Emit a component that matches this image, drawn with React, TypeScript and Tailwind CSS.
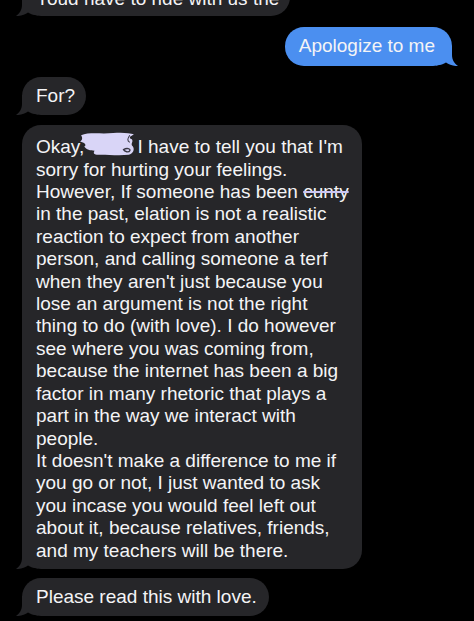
import React from "react";

const lines: React.ReactNode[] = [
  <>
    Okay,
    <span className="relative inline-block w-[48px] h-[1em] align-baseline">
      <svg className="absolute left-[-6px] top-[-3px]" width="58" height="27" viewBox="0 0 56 26">
        <path
          d="M3 4 C10 1 22 3 34 2 C42 1 50 2 54 3 C51 5 48 6 52 8 C54 11 50 12 53 15 C55 18 53 22 49 23 C40 24 30 23 22 23 C16 23 14 22 16 19 C12 19 8 18 6 15 C9 13 6 11 2 10 C5 8 4 6 3 4 Z"
          fill="#d9d5f7"
        />
        <path d="M44 18 C47 16 51 17 50 19 C49 21 45 20 44 18 Z" fill="none" stroke="#3a3845" strokeWidth="1.4" />
        <path d="M50 4 C48 7 47 9 50 11" fill="none" stroke="#3a3845" strokeWidth="1" />
      </svg>
    </span>{" "}
    I have to tell you that I'm
  </>,
  "sorry for hurting your feelings.",
  <>
    However, If someone has been{" "}
    <span className="line-through decoration-[#cbc6f2] decoration-2">cunty</span>
  </>,
  "in the past, elation is not a realistic",
  "reaction to expect from another",
  "person, and calling someone a terf",
  "when they aren't just because you",
  "lose an argument is not the right",
  "thing to do (with love). I do however",
  "see where you was coming from,",
  "because the internet has been a big",
  "factor in many rhetoric that plays a",
  "part in the way we interact with",
  "people.",
  "It doesn't make a difference to me if",
  "you go or not, I just wanted to ask",
  "you incase you would feel left out",
  "about it, because relatives, friends,",
  "and my teachers will be there.",
];

function Tail({ color, side }: { color: string; side: "left" | "right" }) {
  return (
    <svg
      className={
        side === "left"
          ? "absolute left-[-6px] bottom-0"
          : "absolute right-[-6px] bottom-0 -scale-x-100"
      }
      width="22"
      height="20"
      viewBox="0 0 22 20"
    >
      <path d="M6 0 V9 C6 14 3.5 17.5 0 20 C4.5 20.3 9 18.8 12 16.5 C14.5 18 17 19 22 19.6 V0 Z" fill={color} />
    </svg>
  );
}

function Bubble({
  children,
  className = "",
  side = "left",
}: {
  children: React.ReactNode;
  className?: string;
  side?: "left" | "right";
}) {
  const color = side === "left" ? "#262629" : "#4b8ff0";
  return (
    <div
      className={`relative rounded-[19px] text-[19px] leading-[22.4px] text-[#f4f4f6] ${
        side === "left" ? "bg-[#262629] self-start ml-[22px]" : "bg-[#4b8ff0] self-end mr-[22px]"
      } ${className}`}
    >
      <Tail color={color} side={side} />
      <div className="relative">{children}</div>
    </div>
  );
}

export default function App() {
  return (
    <div
      className="w-[474px] h-[621px] overflow-hidden bg-black flex flex-col"
      style={{ fontFamily: '"Liberation Sans", Arial, sans-serif' }}
    >
      <Bubble className="mt-[-22px] pt-[10px] pb-[6px] pl-[14px] pr-[10px] w-[268px] whitespace-nowrap">
        Youd have to ride with us the
      </Bubble>

      <Bubble side="right" className="mt-[11px] py-[8px] pl-[14px] pr-[17px]">
        Apologize to me
      </Bubble>

      <Bubble className="mt-[11px] py-[8px] pl-[14px] pr-[11px]">For?</Bubble>

      <Bubble className="mt-[10px] w-[340px] pt-[9px] pb-[7px] pl-[14px] pr-[10px]">
        {lines.map((l, i) => (
          <div key={i} className="whitespace-nowrap">
            {l}
          </div>
        ))}
      </Bubble>

      <Bubble className="mt-[9px] py-[8px] pl-[14px] pr-[12px]">Please read this with love.</Bubble>
    </div>
  );
}
